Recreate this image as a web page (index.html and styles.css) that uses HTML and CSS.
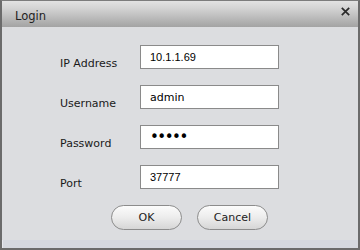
FILE: index.html
```html
<!DOCTYPE html>
<html>
<head>
<meta charset="utf-8">
<link rel="stylesheet" href="styles.css">
</head>
<body>
<div class="dialog">
  <div class="titlebar">
    <span class="title">Login</span>
    <svg class="close" width="9" height="9" viewBox="0 0 9 9"><path d="M0.8 0.8L8.2 8.2M8.2 0.8L0.8 8.2" stroke="#2a2a2a" stroke-width="1.7" fill="none"/></svg>
  </div>
  <div class="content">
    <div class="form">
      <label class="label">IP Address</label>
      <input class="field num" type="text" value="10.1.1.69" readonly>
      <label class="label">Username</label>
      <input class="field txt" type="text" value="admin" readonly>
      <label class="label">Password</label>
      <input class="field pwd" type="password" value="12345" readonly>
      <label class="label">Port</label>
      <input class="field num" type="text" value="37777" readonly>
    </div>
    <div class="buttons">
      <button class="btn">OK</button>
      <button class="btn">Cancel</button>
    </div>
  </div>
  <div class="footer"></div>
</div>
</body>
</html>
```
FILE: styles.css
```css
html, body {
  margin: 0;
  padding: 0;
  background: #dcdde0;
}
.dialog {
  width: 360px;
  height: 250px;
  box-sizing: border-box;
  border: 2px solid #6b6b6b;
  border-top: 1px solid #7c7c7c;
  background: #dcdde0;
  display: flex;
  flex-direction: column;
  font-family: "DejaVu Sans", sans-serif;
}
.titlebar {
  height: 26px;
  flex: none;
  display: flex;
  justify-content: space-between;
  align-items: flex-start;
  padding: 0 8px 0 13px;
  background: linear-gradient(#e2e2e2, #d2d2d2 30%, #a3a3a3);
}
.title {
  margin-top: 9px;
  font-size: 11.5px;
  line-height: 13px;
  color: #222;
}
.close {
  margin-top: 6px;
}
.content {
  flex: 1;
}
.form {
  display: grid;
  grid-template-columns: 80px 139px;
  grid-auto-rows: 24px;
  row-gap: 16px;
  padding: 18px 0 0 58px;
}
.label {
  font-size: 11px;
  line-height: 11px;
  padding-top: 13px;
  color: #1a1a1a;
}
.field {
  height: 24px;
  box-sizing: border-box;
  width: 139px;
  margin: 0;
  border: 1px solid #8a8a8a;
  background: #fff;
  padding: 0 9px;
  color: #000;
  outline: none;
}
.num {
  font-family: "Liberation Sans", sans-serif;
  font-size: 11px;
}
.txt {
  font-family: "DejaVu Sans", sans-serif;
  font-size: 11px;
}
.pwd {
  font-family: "DejaVu Sans", sans-serif;
  font-size: 15px;
  letter-spacing: -1.5px;
}
.buttons {
  display: flex;
  gap: 15px;
  padding: 16px 0 0 109px;
}
.btn {
  width: 71px;
  height: 25px;
  box-sizing: border-box;
  border: 1px solid #8c8c8c;
  border-radius: 13px;
  background: linear-gradient(#fcfcfc, #ececec 50%, #d6d6d6);
  font-family: "DejaVu Sans", sans-serif;
  font-size: 11px;
  color: #222;
  padding: 0;
}
.footer {
  height: 8px;
  flex: none;
  background: #d5d8df;
  border-left: 1px solid #e6e8ee;
}
```
